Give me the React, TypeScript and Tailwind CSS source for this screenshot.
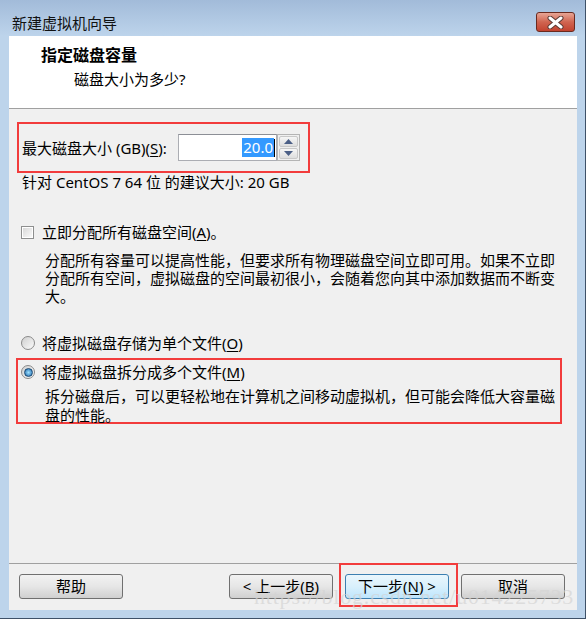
const U = ({ c }: { c: string }) => <span className="underline underline-offset-2">{c}</span>;

const Radio = ({ on }: { on?: boolean }) => (
  <span className="w-[14px] h-[14px] rounded-full border border-[#8a8a8a] bg-linear-to-br from-[#cfcfcf] to-[#fbfbfb] flex items-center justify-center shrink-0">
    {on && <span className="w-[9px] h-[9px] rounded-full border border-[#1b4a73] bg-radial from-[#9ee2ff] to-[#1464a8]" />}
  </span>
);

const Btn = ({ children, primary }: { children: React.ReactNode; primary?: boolean }) => (
  <button
    className={
      primary
        ? "w-[104px] h-[25px] rounded-[3px] border border-[#3c7fb1] bg-linear-to-b from-[#eaf6fd] via-[#d9f0fc] to-[#bee6fd] text-[15px] text-black flex items-center justify-center"
        : "w-[104px] h-[25px] rounded-[3px] border border-[#707070] bg-linear-to-b from-[#f2f2f2] via-[#e6e6e6] to-[#d0d0d0] text-[15px] text-black flex items-center justify-center"
    }
  >
    {children}
  </button>
);

export default function App() {
  return (
    <div className="relative w-[586px] h-[619px] bg-[#bdd4eb] flex flex-col border-r border-b border-[#3e5168] font-['Noto_Sans','Noto_Sans_CJK_SC',sans-serif] text-black">
      {/* title bar */}
      <div className="h-[36px] shrink-0 bg-linear-to-b from-[#a2bbd9] to-[#bdd4eb] flex items-start">
        <div className="pl-[12px] pt-[13px] text-[15px] leading-[20px] text-[#111]">新建虚拟机向导</div>
        <div className="ml-auto mr-[10px] mt-[12px] w-[39px] h-[20px] rounded-[3px] border border-[#6a2a1f] bg-linear-to-b from-[#e7a595] via-[#d06450] to-[#c2422f] flex items-center justify-center">
          <svg width="17" height="13" viewBox="0 0 17 13">
            <path d="M3 2 L14 11 M14 2 L3 11" stroke="#5a3a34" strokeWidth="5" strokeLinecap="round" />
            <path d="M3 2 L14 11 M14 2 L3 11" stroke="#ffffff" strokeWidth="3" strokeLinecap="round" />
          </svg>
        </div>
      </div>

      <div className="flex-1 ml-[9px] mr-[8px] mb-[8px] flex flex-col bg-[#f0f0f0]">
        {/* header */}
        <div className="h-[73px] shrink-0 bg-white border-b border-[#a0a0a0] flex flex-col">
          <div className="pl-[32px] pt-[9px] text-[16px] leading-[20px] font-bold">指定磁盘容量</div>
          <div className="pl-[65px] pt-[4px] text-[15px] leading-[20px]">磁盘大小为多少?</div>
        </div>

        {/* content */}
        <div className="h-[454px] shrink-0 flex flex-col text-[15px]">
          <div className="ml-[8px] mt-[13px] w-[293px] h-[51px] border-2 border-[#f23c3c] flex items-center pl-[3px]">
            <span className="w-[156px] shrink-0 leading-[18px]">
              最大磁盘大小 (GB)(<U c="S" />):
            </span>
            <div className="w-[99px] h-[27px] border border-[#abadb3] border-t-[#8c8f96] bg-white flex items-center justify-end pr-[1px]">
              <span className="bg-[#3399ff] text-white leading-[19px] px-[1px]">20.0</span>
              <span className="w-[1px] h-[18px] bg-black" />
            </div>
            <div className="w-[23px] h-[27px] border border-[#b4b4b4] flex flex-col gap-[1px] p-[1px]">
              <div className="flex-1 rounded-[2px] border border-[#c8c8c8] bg-linear-to-b from-[#f6f6f6] to-[#dedede] flex items-center justify-center">
                <svg width="9" height="5" viewBox="0 0 9 5"><path d="M0 5 L4.5 0 L9 5 Z" fill="#4b5f86" /></svg>
              </div>
              <div className="flex-1 rounded-[2px] border border-[#c8c8c8] bg-linear-to-b from-[#f6f6f6] to-[#dedede] flex items-center justify-center">
                <svg width="9" height="5" viewBox="0 0 9 5"><path d="M0 0 L9 0 L4.5 5 Z" fill="#4b5f86" /></svg>
              </div>
            </div>
          </div>

          <div className="pl-[13px] leading-[18px]">针对 CentOS 7 64 位 的建议大小: 20 GB</div>

          <div className="mt-[32px] pl-[12px] h-[18px] flex items-center gap-[8px]">
            <span className="w-[13px] h-[13px] border border-[#8e8f8f] p-[1px] bg-white shrink-0">
              <span className="block w-full h-full bg-linear-to-br from-[#d9d9d9] to-[#f9f9f9]" />
            </span>
            <span className="leading-[18px]">立即分配所有磁盘空间(<U c="A" />)。</span>
          </div>

          <p className="mt-[10px] pl-[36px] leading-[18px]">
            分配所有容量可以提高性能，但要求所有物理磁盘空间立即可用。如果不立即
            <br />
            分配所有空间，虚拟磁盘的空间最初很小，会随着您向其中添加数据而不断变
            <br />
            大。
          </p>

          <div className="mt-[29px] pl-[12px] h-[18px] flex items-center gap-[7px]">
            <Radio />
            <span className="leading-[18px]">将虚拟磁盘存储为单个文件(<U c="O" />)</span>
          </div>

          <div className="mt-[6px] ml-[7px] w-[546px] h-[66px] border-2 border-[#f23c3c] flex flex-col pl-[3px] pt-[3px]">
            <div className="h-[18px] flex items-center gap-[7px]">
              <Radio on />
              <span className="leading-[18px]">将虚拟磁盘拆分成多个文件(<U c="M" />)</span>
            </div>
            <p className="mt-[6px] pl-[24px] leading-[19px]">
              拆分磁盘后，可以更轻松地在计算机之间移动虚拟机，但可能会降低大容量磁
              <br />
              盘的性能。
            </p>
          </div>
        </div>

        {/* buttons */}
        <div className="flex-1 border-t border-[#a0a0a0] flex items-start pt-[10px] pl-[10px] pr-[12px]">
          <Btn>帮助</Btn>
          <div className="ml-auto flex gap-[12px]">
            <Btn>&lt; 上一步(<U c="B" />)</Btn>
            <Btn primary>下一步(<U c="N" />) &gt;</Btn>
            <Btn>取消</Btn>
          </div>
        </div>
      </div>

      {/* annotation + watermark overlays */}
      <div className="absolute left-[339px] top-[563px] w-[119px] h-[44px] border-2 border-[#f23c3c] pointer-events-none" />
      <div className="absolute left-[254px] top-[584px] text-[22px] leading-[26px] tracking-[0.8px] font-['Liberation_Serif',serif] text-[#d4d4d4]/70 pointer-events-none whitespace-nowrap">
        https://blog.csdn.net/u014225733
      </div>
    </div>
  );
}
